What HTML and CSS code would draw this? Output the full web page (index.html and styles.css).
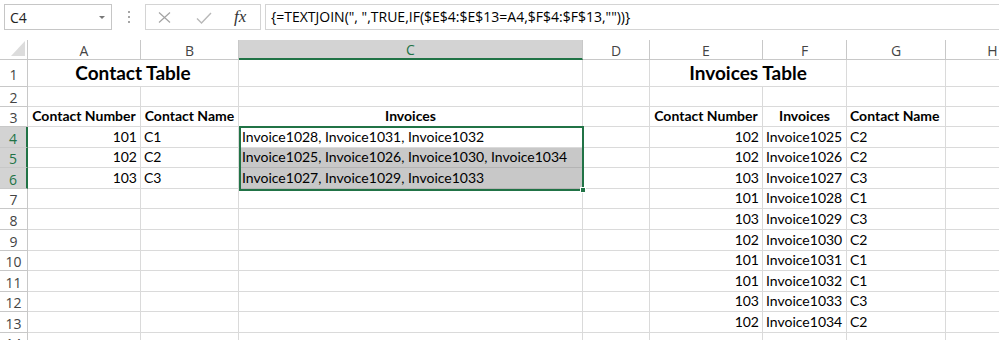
FILE: index.html
```html
<!DOCTYPE html>
<html lang="en">
<head>
  <meta charset="UTF-8" />
  <title>Contact Invoices - Excel</title>
  <link rel="stylesheet" href="styles.css">
</head>
<body>
  <div class="formula-bar">
    <div class="name-box">
      <span>C4</span>
      <svg class="caret" width="6" height="3" viewBox="0 0 6 3"><path d="M0 0h6L3 3z" fill="#777"/></svg>
    </div>
    <div class="grip"><i></i><i></i><i></i></div>
    <div class="fx-buttons">
      <svg class="btn-x" width="13" height="11" viewBox="0 0 13 11"><path d="M1 0.5L12 10.5M12 0.5L1 10.5" stroke="#a3a3a3" stroke-width="1.2" fill="none"/></svg>
      <svg class="btn-ok" width="16" height="12" viewBox="0 0 16 12"><path d="M1 6.5L5.5 11L15 1" stroke="#b8b8b8" stroke-width="1.4" fill="none"/></svg>
      <span class="fx">fx</span>
    </div>
    <div class="formula-input">{=TEXTJOIN(", ",TRUE,IF($E$4:$E$13=A4,$F$4:$F$13,""))}</div>
  </div>

  <div class="sheet">
    <!-- column headers -->
    <div class="corner"><span></span></div>
    <div class="col-head">A</div>
    <div class="col-head">B</div>
    <div class="col-head active">C</div>
    <div class="col-head">D</div>
    <div class="col-head">E</div>
    <div class="col-head">F</div>
    <div class="col-head">G</div>
    <div class="col-head">H</div>

    <!-- row 1 -->
    <div class="row-head">1</div>
    <div class="cell title">Contact Table</div>
    <div class="cell"></div>
    <div class="cell"></div>
    <div class="cell title">Invoices Table</div>
    <div class="cell"></div>
    <div class="cell"></div>

    <!-- row 2 -->
    <div class="row-head">2</div>
    <div class="cell"></div><div class="cell"></div><div class="cell"></div><div class="cell"></div>
    <div class="cell"></div><div class="cell"></div><div class="cell"></div><div class="cell"></div>

    <!-- row 3 -->
    <div class="row-head">3</div>
    <div class="cell head">Contact Number</div>
    <div class="cell head">Contact Name</div>
    <div class="cell head">Invoices</div>
    <div class="cell"></div>
    <div class="cell head">Contact Number</div>
    <div class="cell head">Invoices</div>
    <div class="cell head left">Contact Name</div>
    <div class="cell"></div>

    <!-- row 4 -->
    <div class="row-head active">4</div>
    <div class="cell num">101</div>
    <div class="cell">C1</div>
    <div class="cell">Invoice1028, Invoice1031, Invoice1032</div>
    <div class="cell"></div>
    <div class="cell num">102</div>
    <div class="cell">Invoice1025</div>
    <div class="cell">C2</div>
    <div class="cell"></div>

    <!-- row 5 -->
    <div class="row-head active">5</div>
    <div class="cell num">102</div>
    <div class="cell">C2</div>
    <div class="cell picked">Invoice1025, Invoice1026, Invoice1030, Invoice1034</div>
    <div class="cell"></div>
    <div class="cell num">102</div>
    <div class="cell">Invoice1026</div>
    <div class="cell">C2</div>
    <div class="cell"></div>

    <!-- row 6 -->
    <div class="row-head active">6</div>
    <div class="cell num">103</div>
    <div class="cell">C3</div>
    <div class="cell picked">Invoice1027, Invoice1029, Invoice1033</div>
    <div class="cell"></div>
    <div class="cell num">103</div>
    <div class="cell">Invoice1027</div>
    <div class="cell">C3</div>
    <div class="cell"></div>

    <!-- row 7 -->
    <div class="row-head">7</div>
    <div class="cell"></div><div class="cell"></div><div class="cell"></div><div class="cell"></div>
    <div class="cell num">101</div><div class="cell">Invoice1028</div><div class="cell">C1</div><div class="cell"></div>

    <!-- row 8 -->
    <div class="row-head">8</div>
    <div class="cell"></div><div class="cell"></div><div class="cell"></div><div class="cell"></div>
    <div class="cell num">103</div><div class="cell">Invoice1029</div><div class="cell">C3</div><div class="cell"></div>

    <!-- row 9 -->
    <div class="row-head">9</div>
    <div class="cell"></div><div class="cell"></div><div class="cell"></div><div class="cell"></div>
    <div class="cell num">102</div><div class="cell">Invoice1030</div><div class="cell">C2</div><div class="cell"></div>

    <!-- row 10 -->
    <div class="row-head">10</div>
    <div class="cell"></div><div class="cell"></div><div class="cell"></div><div class="cell"></div>
    <div class="cell num">101</div><div class="cell">Invoice1031</div><div class="cell">C1</div><div class="cell"></div>

    <!-- row 11 -->
    <div class="row-head">11</div>
    <div class="cell"></div><div class="cell"></div><div class="cell"></div><div class="cell"></div>
    <div class="cell num">101</div><div class="cell">Invoice1032</div><div class="cell">C1</div><div class="cell"></div>

    <!-- row 12 -->
    <div class="row-head">12</div>
    <div class="cell"></div><div class="cell"></div><div class="cell"></div><div class="cell"></div>
    <div class="cell num">103</div><div class="cell">Invoice1033</div><div class="cell">C3</div><div class="cell"></div>

    <!-- row 13 -->
    <div class="row-head">13</div>
    <div class="cell"></div><div class="cell"></div><div class="cell"></div><div class="cell"></div>
    <div class="cell num">102</div><div class="cell">Invoice1034</div><div class="cell">C2</div><div class="cell"></div>

    <!-- row 14 -->
    <div class="row-head">14</div>
    <div class="cell"></div><div class="cell"></div><div class="cell"></div><div class="cell"></div>
    <div class="cell"></div><div class="cell"></div><div class="cell"></div><div class="cell"></div>

    <div class="selection"><span class="handle"></span></div>
  </div>
</body>
</html>
```

FILE: styles.css
```css
* {
  margin: 0;
  padding: 0;
  box-sizing: border-box;
}
body {
  width: 999px;
  height: 340px;
  overflow: hidden;
  background: #fff;
  color: #000;
  font-family: Lato, sans-serif;
}

/* formula bar */
.formula-bar {
  display: flex;
  align-items: flex-start;
  height: 40px;
  padding-top: 4px;
  font-family: "Open Sans", sans-serif;
  font-size: 14px;
  color: #222;
}
.name-box {
  margin-left: 4px;
  width: 108px;
  height: 26px;
  border: 1px solid #c6c6c6;
  display: flex;
  align-items: center;
  justify-content: space-between;
  padding: 0 6px 0 5px;
}
.grip {
  width: 33px;
  display: flex;
  flex-direction: column;
  align-items: center;
  gap: 3px;
  padding-top: 7px;
}
.grip i {
  width: 2px;
  height: 2px;
  background: #a6a6a6;
}
.fx-buttons {
  width: 116px;
  height: 26px;
  border: 1px solid #d4d4d4;
  display: flex;
  align-items: center;
  padding-left: 12px;
}
.btn-x {
  margin-top: 1px;
}
.btn-ok {
  margin-left: 25px;
  margin-top: 2px;
}
.fx {
  margin-left: 22px;
  font-family: "Liberation Serif", serif;
  font-style: italic;
  font-size: 17px;
  color: #333;
}
.formula-input {
  flex: 1;
  margin-left: 4px;
  height: 26px;
  border: 1px solid #d4d4d4;
  border-right: none;
  padding-left: 5px;
  line-height: 24px;
  white-space: nowrap;
  color: #000;
}

/* sheet grid */
.sheet {
  position: relative;
  display: grid;
  grid-template-columns: 28px 113px 98px 344px 67px 113px 84px 99px 94px;
  grid-template-rows: 20px 27px 20px 20px 21px 20px 21px 20px 21px 21px 20px 21px 20px 21px 20px;
}
.sheet > div {
  border-right: 1px solid #dadada;
  border-bottom: 1px solid #dadada;
}
.corner {
  display: flex;
  justify-content: flex-end;
  align-items: flex-end;
  padding: 0 2px 3px 0;
  border-color: #c8c8c8 !important;
}
.corner span {
  width: 14px;
  height: 15px;
  background: #dcdcdc;
  clip-path: polygon(100% 0, 100% 100%, 0 100%);
}
.col-head,
.row-head {
  display: flex;
  align-items: center;
  justify-content: center;
  font-family: "Open Sans", sans-serif;
  font-size: 14px;
  color: #444;
  border-color: #c8c8c8 !important;
}
.col-head {
  padding-top: 1px;
}
.row-head {
  padding-top: 2px;
}
.col-head.active {
  background: #d3d3d3;
  color: #217346;
  border-bottom: 2px solid #217346 !important;
}
.row-head.active {
  background: #d3d3d3;
  color: #217346;
  border-right: 2px solid #217346 !important;
}

.cell {
  display: flex;
  align-items: flex-end;
  padding: 0 3px 1px;
  font-size: 14px;
  line-height: 18px;
  white-space: nowrap;
}
.cell.num {
  justify-content: flex-end;
}
.cell.head {
  justify-content: center;
  font-weight: 700;
}
.cell.head.left {
  justify-content: flex-start;
}
.cell.title {
  grid-column: span 2;
  justify-content: center;
  font-size: 19px;
  font-weight: 700;
  line-height: 24px;
}
.cell.picked {
  background: #c8c8c8;
  border-bottom-color: #b4b4b4;
}

/* selected range C4:C6 */
.selection {
  position: absolute;
  left: 239px;
  top: 86px;
  width: 345px;
  height: 65px;
  border: 2px solid #217346 !important;
}
.handle {
  position: absolute;
  right: -4px;
  bottom: -4px;
  width: 6px;
  height: 6px;
  background: #217346;
  border: 1px solid #fff;
}
```
